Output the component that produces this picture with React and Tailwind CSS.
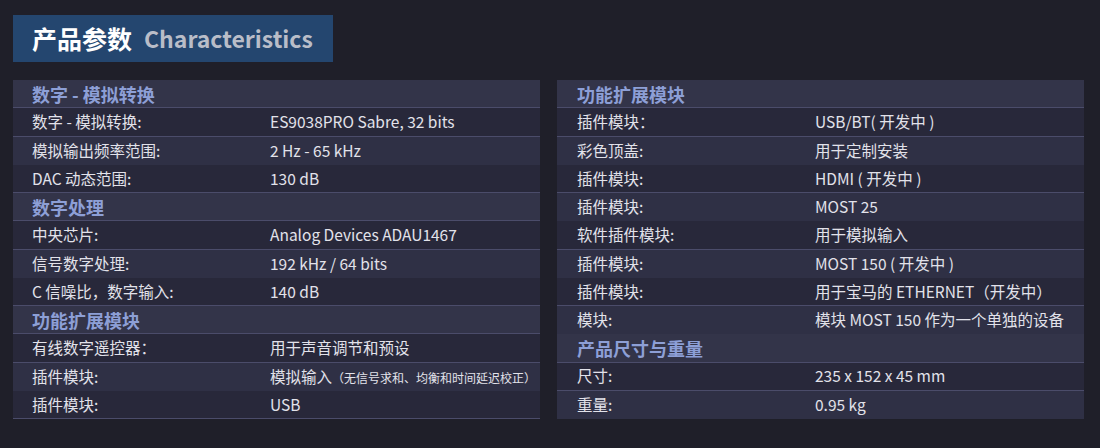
import React from "react";

const left = [
  { h: "数字 - 模拟转换" },
  { l: "数字 - 模拟转换:", v: "ES9038PRO Sabre, 32 bits" },
  { l: "模拟输出频率范围:", v: "2 Hz - 65 kHz" },
  { l: "DAC 动态范围:", v: "130 dB" },
  { h: "数字处理" },
  { l: "中央芯片:", v: "Analog Devices ADAU1467" },
  { l: "信号数字处理:", v: "192 kHz / 64 bits" },
  { l: "C 信噪比，数字输入:", v: "140 dB" },
  { h: "功能扩展模块" },
  { l: "有线数字遥控器：", v: "用于声音调节和预设" },
  { l: "插件模块:", v: "模拟输入", s: "（无信号求和、均衡和时间延迟校正）" },
  { l: "插件模块:", v: "USB" },
];

const right = [
  { h: "功能扩展模块" },
  { l: "插件模块：", v: "USB/BT( 开发中 )" },
  { l: "彩色顶盖:", v: "用于定制安装" },
  { l: "插件模块:", v: "HDMI ( 开发中 )" },
  { l: "插件模块:", v: "MOST 25" },
  { l: "软件插件模块:", v: "用于模拟输入" },
  { l: "插件模块:", v: "MOST 150 ( 开发中 )" },
  { l: "插件模块:", v: "用于宝马的 ETHERNET（开发中）" },
  { l: "模块:", v: "模块 MOST 150 作为一个单独的设备" },
  { h: "产品尺寸与重量" },
  { l: "尺寸:", v: "235 x 152 x 45 mm" },
  { l: "重量:", v: "0.95 kg" },
];

function Table({ rows, padL, labelW }) {
  let idx = 0;
  return (
    <div className="w-[527px] h-[339px] grid grid-rows-12">
      {rows.map((r, i) => {
        if (r.h) {
          idx = 0;
          return (
            <div
              key={i}
              className={`bg-[#333449] border-b border-[#4b4c6a] flex items-center ${padL} text-[18px] font-bold text-[#8d9fd6] leading-none`}
            >
              {r.h}
            </div>
          );
        }
        idx += 1;
        const dark = idx % 2 === 1;
        return (
          <div
            key={i}
            className={`${dark ? "bg-[#28283a] border-b border-[#4b4c6a]" : "bg-[#2f3045]"} flex items-center ${padL} text-[15.5px] text-[#e2e2ea] leading-none`}
          >
            <div className={`${labelW} shrink-0`}>{r.l}</div>
            <div className="whitespace-nowrap">
              {r.v}
              {r.s && <span className="text-[12px]">{r.s}</span>}
            </div>
          </div>
        );
      })}
    </div>
  );
}

export default function App() {
  return (
    <div
      className="w-[1100px] h-[448px] bg-[#1f1f29] overflow-hidden"
      style={{ fontFamily: '"Noto Sans CJK SC", "Noto Sans", sans-serif' }}
    >
      <div className="pt-[15px] pl-[13px]">
        <div className="w-[320px] h-[47px] bg-[#24466f] flex items-center pl-[19px] gap-[12px]">
          <span className="text-[25px] font-bold text-white leading-none">产品参数</span>
          <span className="text-[23px] font-bold text-[#b9bdc8] leading-none">Characteristics</span>
        </div>
      </div>
      <div className="flex gap-[17px] pl-[13px] mt-[18px]">
        <Table rows={left} padL="pl-[19px]" labelW="w-[238px]" />
        <Table rows={right} padL="pl-[20px]" labelW="w-[238px]" />
      </div>
    </div>
  );
}
